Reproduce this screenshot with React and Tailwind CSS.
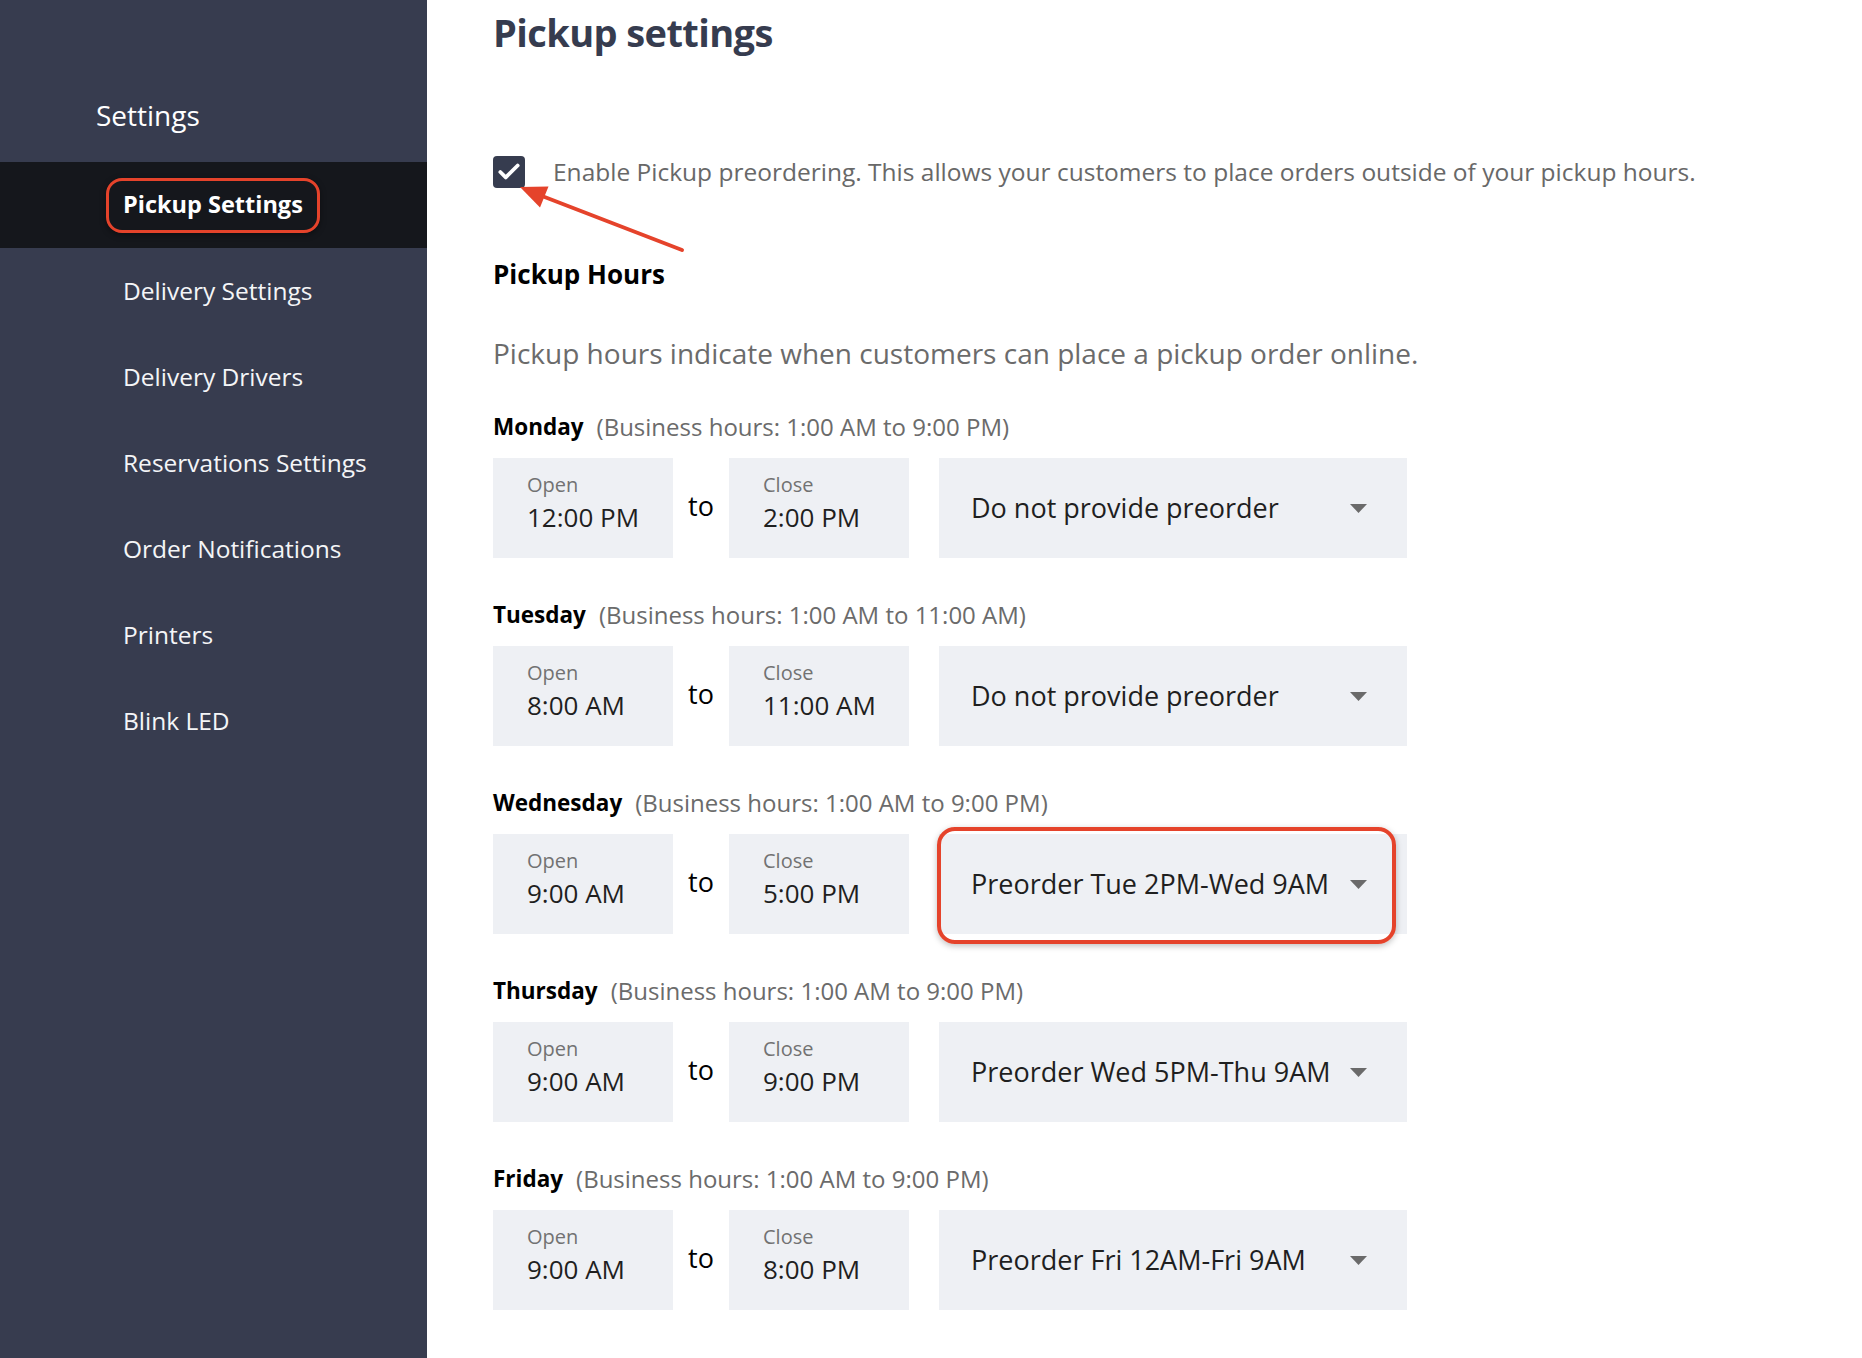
import { Check } from "lucide-react";

const menu = [
  "Pickup Settings",
  "Delivery Settings",
  "Delivery Drivers",
  "Reservations Settings",
  "Order Notifications",
  "Printers",
  "Blink LED",
];

const days = [
  { day: "Monday", hours: "1:00 AM to 9:00 PM", open: "12:00 PM", close: "2:00 PM", preorder: "Do not provide preorder" },
  { day: "Tuesday", hours: "1:00 AM to 11:00 AM", open: "8:00 AM", close: "11:00 AM", preorder: "Do not provide preorder" },
  { day: "Wednesday", hours: "1:00 AM to 9:00 PM", open: "9:00 AM", close: "5:00 PM", preorder: "Preorder Tue 2PM-Wed 9AM", marked: true },
  { day: "Thursday", hours: "1:00 AM to 9:00 PM", open: "9:00 AM", close: "9:00 PM", preorder: "Preorder Wed 5PM-Thu 9AM" },
  { day: "Friday", hours: "1:00 AM to 9:00 PM", open: "9:00 AM", close: "8:00 PM", preorder: "Preorder Fri 12AM-Fri 9AM" },
];

function TimeBox({ label, value }) {
  return (
    <div className="w-[180px] h-[100px] bg-[#eef0f4] pl-[34px] pt-[13px] flex flex-col">
      <span className="text-[20px] leading-[28px] text-[#727272]">{label}</span>
      <span className="text-[26px] leading-[36px] text-[#1f1f1f]">{value}</span>
    </div>
  );
}

function DayRow({ d }) {
  return (
    <div className="mb-[41px]">
      {/* label */}
      <div className="flex items-center h-[32px] mb-[15px]">
        <span className="text-[22.5px] font-bold text-black">{d.day}</span>
        <span className="ml-[13px] text-[24px] text-[#6b6b6b]">(Business hours: {d.hours})</span>
      </div>

      <div className="flex items-center">
        <TimeBox label="Open" value={d.open} />
        <span className="w-[56px] text-center text-[27px] text-black -mt-[4px]">to</span>
        <TimeBox label="Close" value={d.close} />

        {/* preorder select */}
        <div className="relative ml-[30px] w-[468px] h-[100px] bg-[#eef0f4] pl-[32px] pr-[40px] flex items-center justify-between">
          <span className="text-[27px] text-[#1f1f1f]">{d.preorder}</span>
          <svg width="17" height="9" viewBox="0 0 17 9">
            <polygon points="0,0 17,0 8.5,9" fill="#6a6a6a" />
          </svg>
          {d.marked && (
            <div className="absolute -left-[2px] -top-[7px] right-[11px] -bottom-[10px] border-[4px] border-[#e5432b] rounded-[18px] shadow-[0_2px_6px_rgba(0,0,0,0.25)]" />
          )}
        </div>
      </div>
    </div>
  );
}

export default function App() {
  return (
    <div className="flex h-screen overflow-hidden bg-white font-['Open_Sans',sans-serif]">
      {/* Sidebar */}
      <aside className="w-[427px] shrink-0 bg-[#373c4f] text-white">
        <h2 className="pl-[96px] pt-[95px] text-[28px] leading-[40px] mb-[27px]">Settings</h2>
        <nav className="flex flex-col">
          {menu.map((item, i) =>
            i === 0 ? (
              <div key={item} className="h-[86px] bg-[#15171c] flex items-center pl-[106px]">
                <span className="border-[3px] border-[#e5432b] rounded-[16px] px-[14px] h-[55px] flex items-center text-[23.5px] font-bold shadow-[0_2px_6px_rgba(0,0,0,0.4)]">
                  {item}
                </span>
              </div>
            ) : (
              <div key={item} className="h-[86px] flex items-center pl-[123px] text-[24.5px] text-[#f4f5f7]">
                {item}
              </div>
            )
          )}
        </nav>
      </aside>

      {/* Main */}
      <main className="relative flex-1 pl-[66px] pt-[6px]">
        <h1 className="text-[38px] leading-[52px] font-bold text-[#363c4f] tracking-[-0.6px]">Pickup settings</h1>

        <label className="mt-[96px] flex items-center h-[36px]">
          <span className="w-[32px] h-[32px] rounded-[4px] bg-[#363c4f] flex items-center justify-center">
            <Check size={26} strokeWidth={3.5} className="text-white" />
          </span>
          <span className="ml-[28px] text-[24.5px] text-[#686868]">
            Enable Pickup preordering. This allows your customers to place orders outside of your pickup hours.
          </span>
        </label>

        <h3 className="mt-[66px] text-[26px] leading-[36px] font-bold text-black">Pickup Hours</h3>

        <p className="mt-[43px] text-[28px] leading-[36px] text-[#6b6b6b]">
          Pickup hours indicate when customers can place a pickup order online.
        </p>

        <div className="mt-[40px]">
          {days.map((d) => (
            <DayRow key={d.day} d={d} />
          ))}
        </div>

        {/* annotation arrow */}
        <svg className="absolute left-0 top-0 pointer-events-none" width="300" height="280">
          <line x1="255" y1="250" x2="115" y2="196" stroke="#e5432b" strokeWidth="4" strokeLinecap="round" />
          <polygon points="93,187 121.5,186.5 113,207.5" fill="#e5432b" />
        </svg>
      </main>
    </div>
  );
}
